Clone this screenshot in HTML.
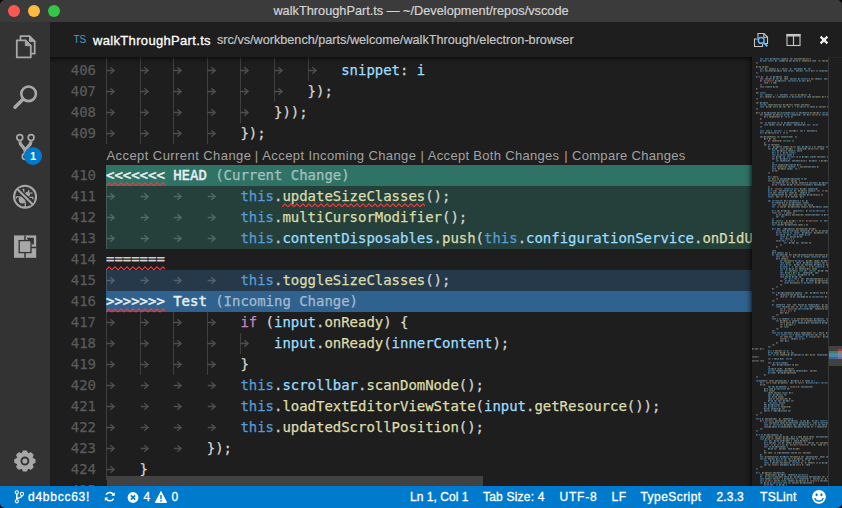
<!DOCTYPE html>
<html lang="en">
<head>
<meta charset="utf-8">
<title>walkThroughPart.ts — ~/Development/repos/vscode</title>
<style>
html,body{margin:0;padding:0;background:#000;}
body{width:842px;height:508px;overflow:hidden;position:relative;font-family:"Liberation Sans",sans-serif;}
#win{position:absolute;left:0;top:0;width:842px;height:508px;border-radius:5px;overflow:hidden;background:#1e1e1e;}
#titlebar{position:absolute;left:0;top:0;width:842px;height:22px;background:#3b3b3b;color:#d4d4d4;font-size:12.75px;line-height:22px;text-align:center;-webkit-text-stroke:.2px #d4d4d4;}
.tl{position:absolute;top:5px;width:12px;height:12px;border-radius:50%;}
#activity{position:absolute;left:0;top:22px;width:50px;height:464px;background:#333333;}
#activity svg{position:absolute;left:0;top:0;}
#badge{position:absolute;left:24px;top:125px;width:18px;height:18px;border-radius:50%;background:#007acc;color:#fff;font-size:11px;font-weight:bold;line-height:18px;text-align:center;}
#main{position:absolute;left:50px;top:22px;width:792px;height:464px;overflow:hidden;}
#header{position:absolute;left:0;top:0;width:792px;height:35px;background:#1e1e1e;z-index:5;}
#header .ts{position:absolute;left:23.5px;top:12px;font-size:10px;line-height:12px;color:#519aba;letter-spacing:0px;}
#header .fn{position:absolute;left:43px;top:10px;font-size:13px;line-height:17px;color:#ffffff;white-space:nowrap;letter-spacing:.33px;-webkit-text-stroke:.3px #fff;}
#header .path{position:absolute;left:167px;top:10px;font-size:12.66px;line-height:17px;color:#c4c4c4;white-space:nowrap;-webkit-text-stroke:.2px #c4c4c4;}
#header svg{position:absolute;left:0;top:0;}
#editor{position:absolute;left:0;top:35px;width:702px;height:429px;overflow:hidden;background:#1e1e1e;}
#editor:after{content:"";position:absolute;left:0;top:0;width:702px;height:429px;box-shadow:inset 0 6px 6px -6px #000, inset -6px 0 6px -6px #000;z-index:4;}
#inner{position:absolute;left:0;top:-57px;width:702px;height:508px;font-family:"DejaVu Sans Mono","Liberation Mono",monospace;font-size:14px;line-height:21px;}
.band{position:absolute;left:56px;width:646px;height:21px;}
.num{position:absolute;left:0;width:46px;text-align:right;color:#5a5a5a;height:21px;white-space:pre;letter-spacing:-0.03px;-webkit-text-stroke:.25px;}
.g{position:absolute;width:1px;height:21px;background:rgba(255,255,255,.15);}
.ar{position:absolute;height:21px;width:9px;}
.sq{position:absolute;height:5px;}
.lens span{position:absolute;top:1px;}
.code{position:absolute;white-space:pre;height:21px;letter-spacing:-0.03px;-webkit-text-stroke:.25px;}
.lens{position:absolute;left:0;width:702px;height:21px;line-height:21px;font-family:"Liberation Sans",sans-serif;font-size:13px;letter-spacing:.43px;color:#a2a2a2;white-space:pre;}
.v{color:#9cdcfe}.k{color:#569cd6}.p{color:#d4d4d4}.f{color:#dcdcaa}.c{color:#c586c0}.h{color:#e8eeec;-webkit-text-stroke:.45px}.hm{color:rgba(255,255,255,.5)}
#minimap{position:absolute;left:702px;top:35px;width:76px;height:429px;background:#1e1e1e;}
#ruler{position:absolute;left:778px;top:35px;width:14px;height:429px;background:#1e1e1e;border-left:1px solid #383838;border-top:1px solid #272727;box-sizing:border-box;}
#hscroll{position:absolute;left:57px;top:454px;width:376px;height:10px;background:#424242;}
#status{position:absolute;left:0;top:486px;width:842px;height:22px;background:#007acc;color:#ffffff;font-size:12px;line-height:23px;-webkit-text-stroke:.3px #fff;}
#status span{position:absolute;top:0;white-space:nowrap;}
#status svg{position:absolute;left:0;top:0;}
</style>
</head>
<body>
<div id="win">
  <div id="titlebar">walkThroughPart.ts — ~/Development/repos/vscode
    <i class="tl" style="left:8px;background:#fc5753"></i>
    <i class="tl" style="left:28px;background:#fdbc40"></i>
    <i class="tl" style="left:48px;background:#33c748"></i>
  </div>
  <div id="activity">
<svg width="50" height="464" viewBox="0 0 50 464" fill="none" stroke="#a8a8a8" stroke-linecap="round" stroke-linejoin="round">
<g stroke-width="1.8">
<path d="M16.8 18.300h8.600l5.400 5.400v11.600h-14z"/><path d="M25.400 18.300v5.400h5.400z" fill="#a8a8a8" stroke-width="1"/>
<path d="M20.5 17.2v-3h9l5.2 5.2v12.3h-2.8"/><path d="M29.5 14.2v5.2h5.2z" fill="#a8a8a8" stroke-width="1"/>
</g>
<circle cx="28.600" cy="71.800" r="7.300" stroke-width="2.600"/>
<path d="M22.800 77.600L15 85.300" stroke-width="3.500"/>
<g stroke-width="1.7"><circle cx="19.8" cy="115.6" r="2.9"/><circle cx="31.1" cy="115.6" r="2.9"/><circle cx="25.2" cy="134.6" r="2.9"/></g>
<path d="M19.8 119.3C19.8 124.5 25.2 124.5 25.2 129.5V131.4M31.1 119.3C31.1 124.5 25.2 124.5 25.2 129.5" stroke-width="3.2" stroke-linecap="butt"/>
<circle cx="25.050" cy="174.800" r="11" stroke-width="2.100"/>
<g stroke="none" fill="#a8a8a8"><circle cx="22.300" cy="177.800" r="3.600"/><circle cx="27.500" cy="172.300" r="2.500"/></g>
<g stroke-width="1.300" stroke-linecap="butt" stroke-linejoin="miter"><path d="M16.400 176.600v-1.700h4M25.300 180v4.800h-1.800M23.700 171v-3.600h-1.200M28.300 170.400l0.600-2.400M29.500 171.200h3M29.400 175.300h3.400v2"/></g>
<path d="M17.800 167.500L32.400 182" stroke="#333333" stroke-width="4.600" stroke-linecap="butt"/>
<path d="M17.300 167L32.800 182.400" stroke-width="2.100" stroke-linecap="butt"/>
<rect x="14" y="213.4" width="22.2" height="22.4" fill="#a8a8a8" stroke="none"/>
<g stroke="#333333" stroke-width="1.3" stroke-linecap="butt" stroke-linejoin="miter">
<rect x="19.2" y="218.6" width="11.8" height="12"/>
<path d="M25 213.4v5.2M25 230.6v5.2M31 225.6h5.2M27 216.6h6v6" stroke-width="1.5"/>
<path d="M28 217.4h4.2v4.2" stroke-width="2.2"/>
</g>
<path d="M21.90 432.30 L23.40 429.00 L26.40 429.00 L27.90 432.30 L27.51 432.14 L30.91 430.87 L33.03 432.99 L31.76 436.39 L31.60 436.00 L34.90 437.50 L34.90 440.50 L31.60 442.00 L31.76 441.61 L33.03 445.01 L30.91 447.13 L27.51 445.86 L27.90 445.70 L26.40 449.00 L23.40 449.00 L21.90 445.70 L22.29 445.86 L18.89 447.13 L16.77 445.01 L18.04 441.61 L18.20 442.00 L14.90 440.50 L14.90 437.50 L18.20 436.00 L18.04 436.39 L16.77 432.99 L18.89 430.87 L22.29 432.14Z" fill="#a8a8a8" stroke="#a8a8a8" stroke-width="1.2"/>
<circle cx="24.9" cy="439" r="3.5" fill="#a8a8a8" stroke="#333333" stroke-width="1.9"/>
</svg>
<div id="badge">1</div>
  </div>
  <div id="main">
  <div id="editor"><div id="inner">
<div class="num" style="top:39px">405</div>
<i class="g" style="left:56.0px;top:39px"></i>
<i class="g" style="left:89.6px;top:39px"></i>
<i class="g" style="left:123.2px;top:39px"></i>
<i class="g" style="left:156.8px;top:39px"></i>
<i class="g" style="left:190.4px;top:39px"></i>
<i class="g" style="left:224.0px;top:39px"></i>
<i class="g" style="left:257.6px;top:39px"></i>
<svg class="ar" style="left:56.0px;top:39px" viewBox="0 0 9 21"><path d="M0.7 10.5H8M4.3 7.2L8.2 10.5L4.3 13.8" fill="none" stroke="rgba(227,228,226,0.24)" stroke-width="1.35"/></svg>
<svg class="ar" style="left:89.6px;top:39px" viewBox="0 0 9 21"><path d="M0.7 10.5H8M4.3 7.2L8.2 10.5L4.3 13.8" fill="none" stroke="rgba(227,228,226,0.24)" stroke-width="1.35"/></svg>
<svg class="ar" style="left:123.2px;top:39px" viewBox="0 0 9 21"><path d="M0.7 10.5H8M4.3 7.2L8.2 10.5L4.3 13.8" fill="none" stroke="rgba(227,228,226,0.24)" stroke-width="1.35"/></svg>
<svg class="ar" style="left:156.8px;top:39px" viewBox="0 0 9 21"><path d="M0.7 10.5H8M4.3 7.2L8.2 10.5L4.3 13.8" fill="none" stroke="rgba(227,228,226,0.24)" stroke-width="1.35"/></svg>
<svg class="ar" style="left:190.4px;top:39px" viewBox="0 0 9 21"><path d="M0.7 10.5H8M4.3 7.2L8.2 10.5L4.3 13.8" fill="none" stroke="rgba(227,228,226,0.24)" stroke-width="1.35"/></svg>
<svg class="ar" style="left:224.0px;top:39px" viewBox="0 0 9 21"><path d="M0.7 10.5H8M4.3 7.2L8.2 10.5L4.3 13.8" fill="none" stroke="rgba(227,228,226,0.24)" stroke-width="1.35"/></svg>
<svg class="ar" style="left:257.6px;top:39px" viewBox="0 0 9 21"><path d="M0.7 10.5H8M4.3 7.2L8.2 10.5L4.3 13.8" fill="none" stroke="rgba(227,228,226,0.24)" stroke-width="1.35"/></svg>
<div class="num" style="top:60px">406</div>
<i class="g" style="left:56.0px;top:60px"></i>
<i class="g" style="left:89.6px;top:60px"></i>
<i class="g" style="left:123.2px;top:60px"></i>
<i class="g" style="left:156.8px;top:60px"></i>
<i class="g" style="left:190.4px;top:60px"></i>
<i class="g" style="left:224.0px;top:60px"></i>
<i class="g" style="left:257.6px;top:60px"></i>
<svg class="ar" style="left:56.0px;top:60px" viewBox="0 0 9 21"><path d="M0.7 10.5H8M4.3 7.2L8.2 10.5L4.3 13.8" fill="none" stroke="rgba(227,228,226,0.24)" stroke-width="1.35"/></svg>
<svg class="ar" style="left:89.6px;top:60px" viewBox="0 0 9 21"><path d="M0.7 10.5H8M4.3 7.2L8.2 10.5L4.3 13.8" fill="none" stroke="rgba(227,228,226,0.24)" stroke-width="1.35"/></svg>
<svg class="ar" style="left:123.2px;top:60px" viewBox="0 0 9 21"><path d="M0.7 10.5H8M4.3 7.2L8.2 10.5L4.3 13.8" fill="none" stroke="rgba(227,228,226,0.24)" stroke-width="1.35"/></svg>
<svg class="ar" style="left:156.8px;top:60px" viewBox="0 0 9 21"><path d="M0.7 10.5H8M4.3 7.2L8.2 10.5L4.3 13.8" fill="none" stroke="rgba(227,228,226,0.24)" stroke-width="1.35"/></svg>
<svg class="ar" style="left:190.4px;top:60px" viewBox="0 0 9 21"><path d="M0.7 10.5H8M4.3 7.2L8.2 10.5L4.3 13.8" fill="none" stroke="rgba(227,228,226,0.24)" stroke-width="1.35"/></svg>
<svg class="ar" style="left:224.0px;top:60px" viewBox="0 0 9 21"><path d="M0.7 10.5H8M4.3 7.2L8.2 10.5L4.3 13.8" fill="none" stroke="rgba(227,228,226,0.24)" stroke-width="1.35"/></svg>
<svg class="ar" style="left:257.6px;top:60px" viewBox="0 0 9 21"><path d="M0.7 10.5H8M4.3 7.2L8.2 10.5L4.3 13.8" fill="none" stroke="rgba(227,228,226,0.24)" stroke-width="1.35"/></svg>
<div class="code" style="left:291.2px;top:60px"><span class="v">snippet</span><span class="p">: </span><span class="v">i</span></div>
<div class="num" style="top:81px">407</div>
<i class="g" style="left:56.0px;top:81px"></i>
<i class="g" style="left:89.6px;top:81px"></i>
<i class="g" style="left:123.2px;top:81px"></i>
<i class="g" style="left:156.8px;top:81px"></i>
<i class="g" style="left:190.4px;top:81px"></i>
<i class="g" style="left:224.0px;top:81px"></i>
<svg class="ar" style="left:56.0px;top:81px" viewBox="0 0 9 21"><path d="M0.7 10.5H8M4.3 7.2L8.2 10.5L4.3 13.8" fill="none" stroke="rgba(227,228,226,0.24)" stroke-width="1.35"/></svg>
<svg class="ar" style="left:89.6px;top:81px" viewBox="0 0 9 21"><path d="M0.7 10.5H8M4.3 7.2L8.2 10.5L4.3 13.8" fill="none" stroke="rgba(227,228,226,0.24)" stroke-width="1.35"/></svg>
<svg class="ar" style="left:123.2px;top:81px" viewBox="0 0 9 21"><path d="M0.7 10.5H8M4.3 7.2L8.2 10.5L4.3 13.8" fill="none" stroke="rgba(227,228,226,0.24)" stroke-width="1.35"/></svg>
<svg class="ar" style="left:156.8px;top:81px" viewBox="0 0 9 21"><path d="M0.7 10.5H8M4.3 7.2L8.2 10.5L4.3 13.8" fill="none" stroke="rgba(227,228,226,0.24)" stroke-width="1.35"/></svg>
<svg class="ar" style="left:190.4px;top:81px" viewBox="0 0 9 21"><path d="M0.7 10.5H8M4.3 7.2L8.2 10.5L4.3 13.8" fill="none" stroke="rgba(227,228,226,0.24)" stroke-width="1.35"/></svg>
<svg class="ar" style="left:224.0px;top:81px" viewBox="0 0 9 21"><path d="M0.7 10.5H8M4.3 7.2L8.2 10.5L4.3 13.8" fill="none" stroke="rgba(227,228,226,0.24)" stroke-width="1.35"/></svg>
<div class="code" style="left:257.6px;top:81px"><span class="p">});</span></div>
<div class="num" style="top:102px">408</div>
<i class="g" style="left:56.0px;top:102px"></i>
<i class="g" style="left:89.6px;top:102px"></i>
<i class="g" style="left:123.2px;top:102px"></i>
<i class="g" style="left:156.8px;top:102px"></i>
<i class="g" style="left:190.4px;top:102px"></i>
<svg class="ar" style="left:56.0px;top:102px" viewBox="0 0 9 21"><path d="M0.7 10.5H8M4.3 7.2L8.2 10.5L4.3 13.8" fill="none" stroke="rgba(227,228,226,0.24)" stroke-width="1.35"/></svg>
<svg class="ar" style="left:89.6px;top:102px" viewBox="0 0 9 21"><path d="M0.7 10.5H8M4.3 7.2L8.2 10.5L4.3 13.8" fill="none" stroke="rgba(227,228,226,0.24)" stroke-width="1.35"/></svg>
<svg class="ar" style="left:123.2px;top:102px" viewBox="0 0 9 21"><path d="M0.7 10.5H8M4.3 7.2L8.2 10.5L4.3 13.8" fill="none" stroke="rgba(227,228,226,0.24)" stroke-width="1.35"/></svg>
<svg class="ar" style="left:156.8px;top:102px" viewBox="0 0 9 21"><path d="M0.7 10.5H8M4.3 7.2L8.2 10.5L4.3 13.8" fill="none" stroke="rgba(227,228,226,0.24)" stroke-width="1.35"/></svg>
<svg class="ar" style="left:190.4px;top:102px" viewBox="0 0 9 21"><path d="M0.7 10.5H8M4.3 7.2L8.2 10.5L4.3 13.8" fill="none" stroke="rgba(227,228,226,0.24)" stroke-width="1.35"/></svg>
<div class="code" style="left:224.0px;top:102px"><span class="p">}));</span></div>
<div class="num" style="top:123px">409</div>
<i class="g" style="left:56.0px;top:123px"></i>
<i class="g" style="left:89.6px;top:123px"></i>
<i class="g" style="left:123.2px;top:123px"></i>
<i class="g" style="left:156.8px;top:123px"></i>
<svg class="ar" style="left:56.0px;top:123px" viewBox="0 0 9 21"><path d="M0.7 10.5H8M4.3 7.2L8.2 10.5L4.3 13.8" fill="none" stroke="rgba(227,228,226,0.24)" stroke-width="1.35"/></svg>
<svg class="ar" style="left:89.6px;top:123px" viewBox="0 0 9 21"><path d="M0.7 10.5H8M4.3 7.2L8.2 10.5L4.3 13.8" fill="none" stroke="rgba(227,228,226,0.24)" stroke-width="1.35"/></svg>
<svg class="ar" style="left:123.2px;top:123px" viewBox="0 0 9 21"><path d="M0.7 10.5H8M4.3 7.2L8.2 10.5L4.3 13.8" fill="none" stroke="rgba(227,228,226,0.24)" stroke-width="1.35"/></svg>
<svg class="ar" style="left:156.8px;top:123px" viewBox="0 0 9 21"><path d="M0.7 10.5H8M4.3 7.2L8.2 10.5L4.3 13.8" fill="none" stroke="rgba(227,228,226,0.24)" stroke-width="1.35"/></svg>
<div class="code" style="left:190.4px;top:123px"><span class="p">});</span></div>
<div class="lens" style="top:144px"><span style="left:56.5px;letter-spacing:0.43px">Accept Current Change</span><span style="left:204.7px;letter-spacing:0px">|</span><span style="left:212.3px;letter-spacing:0.4px">Accept Incoming Change</span><span style="left:370.6px;letter-spacing:0px">|</span><span style="left:377.8px;letter-spacing:0.31px">Accept Both Changes</span><span style="left:514.2px;letter-spacing:0px">|</span><span style="left:522px;letter-spacing:0.3px">Compare Changes</span></div>
<div class="band" style="top:165px;background:#2f7366"></div>
<div class="num" style="top:165px">410</div>
<div class="code" style="left:56.0px;top:165px"><span class="h">&lt;&lt;&lt;&lt;&lt;&lt;&lt; HEAD</span><span class="hm"> (Current Change)</span></div>
<svg class="sq" style="left:56.0px;top:182px;width:58.8px" viewBox="0 0 58.8 5"><polyline points="0 4.0 3 0.9 6 4.0 9 0.9 12 4.0 15 0.9 18 4.0 21 0.9 24 4.0 27 0.9 30 4.0 33 0.9 36 4.0 39 0.9 42 4.0 45 0.9 48 4.0 51 0.9 54 4.0 57 0.9 60 4.0" fill="none" stroke="#ee3a3e" stroke-width="1.15"/></svg>
<div class="band" style="top:186px;background:#25403b"></div>
<div class="num" style="top:186px">411</div>
<i class="g" style="left:56.0px;top:186px"></i>
<svg class="ar" style="left:56.0px;top:186px" viewBox="0 0 9 21"><path d="M0.7 10.5H8M4.3 7.2L8.2 10.5L4.3 13.8" fill="none" stroke="rgba(227,228,226,0.24)" stroke-width="1.35"/></svg>
<svg class="ar" style="left:89.6px;top:186px" viewBox="0 0 9 21"><path d="M0.7 10.5H8M4.3 7.2L8.2 10.5L4.3 13.8" fill="none" stroke="rgba(227,228,226,0.24)" stroke-width="1.35"/></svg>
<svg class="ar" style="left:123.2px;top:186px" viewBox="0 0 9 21"><path d="M0.7 10.5H8M4.3 7.2L8.2 10.5L4.3 13.8" fill="none" stroke="rgba(227,228,226,0.24)" stroke-width="1.35"/></svg>
<svg class="ar" style="left:156.8px;top:186px" viewBox="0 0 9 21"><path d="M0.7 10.5H8M4.3 7.2L8.2 10.5L4.3 13.8" fill="none" stroke="rgba(227,228,226,0.24)" stroke-width="1.35"/></svg>
<div class="code" style="left:190.4px;top:186px"><span class="k">this</span><span class="p">.</span><span class="f">updateSizeClasses</span><span class="p">();</span></div>
<svg class="sq" style="left:232.4px;top:203px;width:142.8px" viewBox="0 0 142.8 5"><polyline points="0 4.0 3 0.9 6 4.0 9 0.9 12 4.0 15 0.9 18 4.0 21 0.9 24 4.0 27 0.9 30 4.0 33 0.9 36 4.0 39 0.9 42 4.0 45 0.9 48 4.0 51 0.9 54 4.0 57 0.9 60 4.0 63 0.9 66 4.0 69 0.9 72 4.0 75 0.9 78 4.0 81 0.9 84 4.0 87 0.9 90 4.0 93 0.9 96 4.0 99 0.9 102 4.0 105 0.9 108 4.0 111 0.9 114 4.0 117 0.9 120 4.0 123 0.9 126 4.0 129 0.9 132 4.0 135 0.9 138 4.0 141 0.9 144 4.0" fill="none" stroke="#ee3a3e" stroke-width="1.15"/></svg>
<div class="band" style="top:207px;background:#25403b"></div>
<div class="num" style="top:207px">412</div>
<i class="g" style="left:56.0px;top:207px"></i>
<svg class="ar" style="left:56.0px;top:207px" viewBox="0 0 9 21"><path d="M0.7 10.5H8M4.3 7.2L8.2 10.5L4.3 13.8" fill="none" stroke="rgba(227,228,226,0.24)" stroke-width="1.35"/></svg>
<svg class="ar" style="left:89.6px;top:207px" viewBox="0 0 9 21"><path d="M0.7 10.5H8M4.3 7.2L8.2 10.5L4.3 13.8" fill="none" stroke="rgba(227,228,226,0.24)" stroke-width="1.35"/></svg>
<svg class="ar" style="left:123.2px;top:207px" viewBox="0 0 9 21"><path d="M0.7 10.5H8M4.3 7.2L8.2 10.5L4.3 13.8" fill="none" stroke="rgba(227,228,226,0.24)" stroke-width="1.35"/></svg>
<svg class="ar" style="left:156.8px;top:207px" viewBox="0 0 9 21"><path d="M0.7 10.5H8M4.3 7.2L8.2 10.5L4.3 13.8" fill="none" stroke="rgba(227,228,226,0.24)" stroke-width="1.35"/></svg>
<div class="code" style="left:190.4px;top:207px"><span class="k">this</span><span class="p">.</span><span class="f">multiCursorModifier</span><span class="p">();</span></div>
<div class="band" style="top:228px;background:#25403b"></div>
<div class="num" style="top:228px">413</div>
<i class="g" style="left:56.0px;top:228px"></i>
<svg class="ar" style="left:56.0px;top:228px" viewBox="0 0 9 21"><path d="M0.7 10.5H8M4.3 7.2L8.2 10.5L4.3 13.8" fill="none" stroke="rgba(227,228,226,0.24)" stroke-width="1.35"/></svg>
<svg class="ar" style="left:89.6px;top:228px" viewBox="0 0 9 21"><path d="M0.7 10.5H8M4.3 7.2L8.2 10.5L4.3 13.8" fill="none" stroke="rgba(227,228,226,0.24)" stroke-width="1.35"/></svg>
<svg class="ar" style="left:123.2px;top:228px" viewBox="0 0 9 21"><path d="M0.7 10.5H8M4.3 7.2L8.2 10.5L4.3 13.8" fill="none" stroke="rgba(227,228,226,0.24)" stroke-width="1.35"/></svg>
<svg class="ar" style="left:156.8px;top:228px" viewBox="0 0 9 21"><path d="M0.7 10.5H8M4.3 7.2L8.2 10.5L4.3 13.8" fill="none" stroke="rgba(227,228,226,0.24)" stroke-width="1.35"/></svg>
<div class="code" style="left:190.4px;top:228px"><span class="k">this</span><span class="p">.</span><span class="v">contentDisposables</span><span class="p">.</span><span class="f">push</span><span class="p">(</span><span class="k">this</span><span class="p">.</span><span class="v">configurationService</span><span class="p">.</span><span class="f">onDidUpdateConfiguration</span><span class="p">(</span></div>
<div class="num" style="top:249px">414</div>
<div class="code" style="left:56.0px;top:249px"><span class="p">=======</span></div>
<svg class="sq" style="left:56.0px;top:266px;width:58.8px" viewBox="0 0 58.8 5"><polyline points="0 4.0 3 0.9 6 4.0 9 0.9 12 4.0 15 0.9 18 4.0 21 0.9 24 4.0 27 0.9 30 4.0 33 0.9 36 4.0 39 0.9 42 4.0 45 0.9 48 4.0 51 0.9 54 4.0 57 0.9 60 4.0" fill="none" stroke="#ee3a3e" stroke-width="1.15"/></svg>
<div class="band" style="top:270px;background:#25394b"></div>
<div class="num" style="top:270px">415</div>
<i class="g" style="left:56.0px;top:270px"></i>
<svg class="ar" style="left:56.0px;top:270px" viewBox="0 0 9 21"><path d="M0.7 10.5H8M4.3 7.2L8.2 10.5L4.3 13.8" fill="none" stroke="rgba(227,228,226,0.24)" stroke-width="1.35"/></svg>
<svg class="ar" style="left:89.6px;top:270px" viewBox="0 0 9 21"><path d="M0.7 10.5H8M4.3 7.2L8.2 10.5L4.3 13.8" fill="none" stroke="rgba(227,228,226,0.24)" stroke-width="1.35"/></svg>
<svg class="ar" style="left:123.2px;top:270px" viewBox="0 0 9 21"><path d="M0.7 10.5H8M4.3 7.2L8.2 10.5L4.3 13.8" fill="none" stroke="rgba(227,228,226,0.24)" stroke-width="1.35"/></svg>
<svg class="ar" style="left:156.8px;top:270px" viewBox="0 0 9 21"><path d="M0.7 10.5H8M4.3 7.2L8.2 10.5L4.3 13.8" fill="none" stroke="rgba(227,228,226,0.24)" stroke-width="1.35"/></svg>
<div class="code" style="left:190.4px;top:270px"><span class="k">this</span><span class="p">.</span><span class="f">toggleSizeClasses</span><span class="p">();</span></div>
<div class="band" style="top:291px;background:#2f628e"></div>
<div class="num" style="top:291px">416</div>
<div class="code" style="left:56.0px;top:291px"><span class="h">&gt;&gt;&gt;&gt;&gt;&gt;&gt; Test</span><span class="hm"> (Incoming Change)</span></div>
<svg class="sq" style="left:56.0px;top:308px;width:58.8px" viewBox="0 0 58.8 5"><polyline points="0 4.0 3 0.9 6 4.0 9 0.9 12 4.0 15 0.9 18 4.0 21 0.9 24 4.0 27 0.9 30 4.0 33 0.9 36 4.0 39 0.9 42 4.0 45 0.9 48 4.0 51 0.9 54 4.0 57 0.9 60 4.0" fill="none" stroke="#ee3a3e" stroke-width="1.15"/></svg>
<div class="num" style="top:312px">417</div>
<i class="g" style="left:56.0px;top:312px"></i>
<i class="g" style="left:89.6px;top:312px"></i>
<i class="g" style="left:123.2px;top:312px"></i>
<i class="g" style="left:156.8px;top:312px"></i>
<svg class="ar" style="left:56.0px;top:312px" viewBox="0 0 9 21"><path d="M0.7 10.5H8M4.3 7.2L8.2 10.5L4.3 13.8" fill="none" stroke="rgba(227,228,226,0.24)" stroke-width="1.35"/></svg>
<svg class="ar" style="left:89.6px;top:312px" viewBox="0 0 9 21"><path d="M0.7 10.5H8M4.3 7.2L8.2 10.5L4.3 13.8" fill="none" stroke="rgba(227,228,226,0.24)" stroke-width="1.35"/></svg>
<svg class="ar" style="left:123.2px;top:312px" viewBox="0 0 9 21"><path d="M0.7 10.5H8M4.3 7.2L8.2 10.5L4.3 13.8" fill="none" stroke="rgba(227,228,226,0.24)" stroke-width="1.35"/></svg>
<svg class="ar" style="left:156.8px;top:312px" viewBox="0 0 9 21"><path d="M0.7 10.5H8M4.3 7.2L8.2 10.5L4.3 13.8" fill="none" stroke="rgba(227,228,226,0.24)" stroke-width="1.35"/></svg>
<div class="code" style="left:190.4px;top:312px"><span class="c">if</span><span class="p"> (</span><span class="v">input</span><span class="p">.</span><span class="f">onReady</span><span class="p">) {</span></div>
<div class="num" style="top:333px">418</div>
<i class="g" style="left:56.0px;top:333px"></i>
<i class="g" style="left:89.6px;top:333px"></i>
<i class="g" style="left:123.2px;top:333px"></i>
<i class="g" style="left:156.8px;top:333px"></i>
<i class="g" style="left:190.4px;top:333px"></i>
<svg class="ar" style="left:56.0px;top:333px" viewBox="0 0 9 21"><path d="M0.7 10.5H8M4.3 7.2L8.2 10.5L4.3 13.8" fill="none" stroke="rgba(227,228,226,0.24)" stroke-width="1.35"/></svg>
<svg class="ar" style="left:89.6px;top:333px" viewBox="0 0 9 21"><path d="M0.7 10.5H8M4.3 7.2L8.2 10.5L4.3 13.8" fill="none" stroke="rgba(227,228,226,0.24)" stroke-width="1.35"/></svg>
<svg class="ar" style="left:123.2px;top:333px" viewBox="0 0 9 21"><path d="M0.7 10.5H8M4.3 7.2L8.2 10.5L4.3 13.8" fill="none" stroke="rgba(227,228,226,0.24)" stroke-width="1.35"/></svg>
<svg class="ar" style="left:156.8px;top:333px" viewBox="0 0 9 21"><path d="M0.7 10.5H8M4.3 7.2L8.2 10.5L4.3 13.8" fill="none" stroke="rgba(227,228,226,0.24)" stroke-width="1.35"/></svg>
<svg class="ar" style="left:190.4px;top:333px" viewBox="0 0 9 21"><path d="M0.7 10.5H8M4.3 7.2L8.2 10.5L4.3 13.8" fill="none" stroke="rgba(227,228,226,0.24)" stroke-width="1.35"/></svg>
<div class="code" style="left:224.0px;top:333px"><span class="v">input</span><span class="p">.</span><span class="f">onReady</span><span class="p">(</span><span class="v">innerContent</span><span class="p">);</span></div>
<div class="num" style="top:354px">419</div>
<i class="g" style="left:56.0px;top:354px"></i>
<i class="g" style="left:89.6px;top:354px"></i>
<i class="g" style="left:123.2px;top:354px"></i>
<i class="g" style="left:156.8px;top:354px"></i>
<svg class="ar" style="left:56.0px;top:354px" viewBox="0 0 9 21"><path d="M0.7 10.5H8M4.3 7.2L8.2 10.5L4.3 13.8" fill="none" stroke="rgba(227,228,226,0.24)" stroke-width="1.35"/></svg>
<svg class="ar" style="left:89.6px;top:354px" viewBox="0 0 9 21"><path d="M0.7 10.5H8M4.3 7.2L8.2 10.5L4.3 13.8" fill="none" stroke="rgba(227,228,226,0.24)" stroke-width="1.35"/></svg>
<svg class="ar" style="left:123.2px;top:354px" viewBox="0 0 9 21"><path d="M0.7 10.5H8M4.3 7.2L8.2 10.5L4.3 13.8" fill="none" stroke="rgba(227,228,226,0.24)" stroke-width="1.35"/></svg>
<svg class="ar" style="left:156.8px;top:354px" viewBox="0 0 9 21"><path d="M0.7 10.5H8M4.3 7.2L8.2 10.5L4.3 13.8" fill="none" stroke="rgba(227,228,226,0.24)" stroke-width="1.35"/></svg>
<div class="code" style="left:190.4px;top:354px"><span class="p">}</span></div>
<div class="num" style="top:375px">420</div>
<i class="g" style="left:56.0px;top:375px"></i>
<svg class="ar" style="left:56.0px;top:375px" viewBox="0 0 9 21"><path d="M0.7 10.5H8M4.3 7.2L8.2 10.5L4.3 13.8" fill="none" stroke="rgba(227,228,226,0.24)" stroke-width="1.35"/></svg>
<svg class="ar" style="left:89.6px;top:375px" viewBox="0 0 9 21"><path d="M0.7 10.5H8M4.3 7.2L8.2 10.5L4.3 13.8" fill="none" stroke="rgba(227,228,226,0.24)" stroke-width="1.35"/></svg>
<svg class="ar" style="left:123.2px;top:375px" viewBox="0 0 9 21"><path d="M0.7 10.5H8M4.3 7.2L8.2 10.5L4.3 13.8" fill="none" stroke="rgba(227,228,226,0.24)" stroke-width="1.35"/></svg>
<svg class="ar" style="left:156.8px;top:375px" viewBox="0 0 9 21"><path d="M0.7 10.5H8M4.3 7.2L8.2 10.5L4.3 13.8" fill="none" stroke="rgba(227,228,226,0.24)" stroke-width="1.35"/></svg>
<div class="code" style="left:190.4px;top:375px"><span class="k">this</span><span class="p">.</span><span class="v">scrollbar</span><span class="p">.</span><span class="f">scanDomNode</span><span class="p">();</span></div>
<div class="num" style="top:396px">421</div>
<i class="g" style="left:56.0px;top:396px"></i>
<svg class="ar" style="left:56.0px;top:396px" viewBox="0 0 9 21"><path d="M0.7 10.5H8M4.3 7.2L8.2 10.5L4.3 13.8" fill="none" stroke="rgba(227,228,226,0.24)" stroke-width="1.35"/></svg>
<svg class="ar" style="left:89.6px;top:396px" viewBox="0 0 9 21"><path d="M0.7 10.5H8M4.3 7.2L8.2 10.5L4.3 13.8" fill="none" stroke="rgba(227,228,226,0.24)" stroke-width="1.35"/></svg>
<svg class="ar" style="left:123.2px;top:396px" viewBox="0 0 9 21"><path d="M0.7 10.5H8M4.3 7.2L8.2 10.5L4.3 13.8" fill="none" stroke="rgba(227,228,226,0.24)" stroke-width="1.35"/></svg>
<svg class="ar" style="left:156.8px;top:396px" viewBox="0 0 9 21"><path d="M0.7 10.5H8M4.3 7.2L8.2 10.5L4.3 13.8" fill="none" stroke="rgba(227,228,226,0.24)" stroke-width="1.35"/></svg>
<div class="code" style="left:190.4px;top:396px"><span class="k">this</span><span class="p">.</span><span class="f">loadTextEditorViewState</span><span class="p">(</span><span class="v">input</span><span class="p">.</span><span class="f">getResource</span><span class="p">());</span></div>
<div class="num" style="top:417px">422</div>
<i class="g" style="left:56.0px;top:417px"></i>
<svg class="ar" style="left:56.0px;top:417px" viewBox="0 0 9 21"><path d="M0.7 10.5H8M4.3 7.2L8.2 10.5L4.3 13.8" fill="none" stroke="rgba(227,228,226,0.24)" stroke-width="1.35"/></svg>
<svg class="ar" style="left:89.6px;top:417px" viewBox="0 0 9 21"><path d="M0.7 10.5H8M4.3 7.2L8.2 10.5L4.3 13.8" fill="none" stroke="rgba(227,228,226,0.24)" stroke-width="1.35"/></svg>
<svg class="ar" style="left:123.2px;top:417px" viewBox="0 0 9 21"><path d="M0.7 10.5H8M4.3 7.2L8.2 10.5L4.3 13.8" fill="none" stroke="rgba(227,228,226,0.24)" stroke-width="1.35"/></svg>
<svg class="ar" style="left:156.8px;top:417px" viewBox="0 0 9 21"><path d="M0.7 10.5H8M4.3 7.2L8.2 10.5L4.3 13.8" fill="none" stroke="rgba(227,228,226,0.24)" stroke-width="1.35"/></svg>
<div class="code" style="left:190.4px;top:417px"><span class="k">this</span><span class="p">.</span><span class="f">updatedScrollPosition</span><span class="p">();</span></div>
<div class="num" style="top:438px">423</div>
<i class="g" style="left:56.0px;top:438px"></i>
<svg class="ar" style="left:56.0px;top:438px" viewBox="0 0 9 21"><path d="M0.7 10.5H8M4.3 7.2L8.2 10.5L4.3 13.8" fill="none" stroke="rgba(227,228,226,0.24)" stroke-width="1.35"/></svg>
<svg class="ar" style="left:89.6px;top:438px" viewBox="0 0 9 21"><path d="M0.7 10.5H8M4.3 7.2L8.2 10.5L4.3 13.8" fill="none" stroke="rgba(227,228,226,0.24)" stroke-width="1.35"/></svg>
<svg class="ar" style="left:123.2px;top:438px" viewBox="0 0 9 21"><path d="M0.7 10.5H8M4.3 7.2L8.2 10.5L4.3 13.8" fill="none" stroke="rgba(227,228,226,0.24)" stroke-width="1.35"/></svg>
<div class="code" style="left:156.8px;top:438px"><span class="p">});</span></div>
<div class="num" style="top:459px">424</div>
<i class="g" style="left:56.0px;top:459px"></i>
<svg class="ar" style="left:56.0px;top:459px" viewBox="0 0 9 21"><path d="M0.7 10.5H8M4.3 7.2L8.2 10.5L4.3 13.8" fill="none" stroke="rgba(227,228,226,0.24)" stroke-width="1.35"/></svg>
<div class="code" style="left:89.6px;top:459px"><span class="p">}</span></div>
<div class="num" style="top:480px">425</div>
  </div></div>
  <div id="hscroll"></div>
  <div id="minimap"><svg width="76" height="429" viewBox="752 57 76 429" style="position:absolute;left:0;top:0" >
<path stroke="#569cd6" stroke-opacity="0.85" stroke-width="1.25" stroke-dasharray="0.7 0.5 1.2 0.4 0.5 0.6 0.9 0.3" fill="none" d="M760 58.8h3.8M760 68.8h3.8M805 70.8h4.8M788 80.8h9.8M760 94.8h2.8M760 104.8h4.8M773 106.8h4.8M822 112.8h5.8M807 124.8h3.8M774 130.8h7.8M792 140.8h1.8M772 150.8h3.8M772 154.8h3.8M787 156.8h7.8M772 164.8h4.8M795 168.8h2.8M772 182.8h3.8M794 188.8h3.8M808 192.8h1.8M772 200.8h7.8M772 206.8h2.8M809 210.8h3.8M781 216.8h3.8M772 224.8h3.8M791 230.8h2.8M793 234.8h4.8M780 238.8h3.8M789 252.8h0.8M797 256.8h2.8M780 260.8h2.8M780 264.8h4.8M780 268.8h4.8M780 272.8h3.8M784 278.8h2.8M826 278.8h1.8M801 282.8h1.8M812 296.8h11.8M804 306.8h3.8M776 320.8h2.8M777 332.8h5.8M795 336.8h8.8M802 338.8h2.8M791 350.8h0.8M768 354.8h3.8M786 358.8h5.8M768 370.8h3.8M814 380.8h0.8M821 382.8h6.8M769 402.8h8.8M756 418.8h4.8M764 422.8h3.8M773 424.8h9.8M764 440.8h3.8M760 456.8h3.8M764 460.8h3.8M792 462.8h7.8M798 474.8h9.8M760 480.8h2.8"/>
<path stroke="#569cd6" stroke-opacity="0.85" stroke-width="1.25" stroke-dasharray="1.1 0.4 0.6 0.7 0.8 0.3 1.3 0.5 0.4 0.4" fill="none" d="M760 60.8h4.8M760 70.8h3.8M756 76.8h3.8M799 80.8h6.8M760 96.8h3.8M765 104.8h1.8M797 106.8h8.8M784 114.8h5.8M813 124.8h4.8M760 132.8h3.8M768 146.8h2.8M772 152.8h3.8M777 154.8h8.8M789 158.8h1.8M772 166.8h3.8M768 176.8h3.8M768 188.8h2.8M768 190.8h3.8M768 194.8h3.8M772 202.8h3.8M772 210.8h3.8M813 210.8h11.8M772 220.8h2.8M772 228.8h3.8M776 232.8h4.8M805 234.8h4.8M779 240.8h6.8M772 254.8h2.8M801 256.8h1.8M795 260.8h8.8M780 266.8h4.8M786 268.8h2.8M798 272.8h2.8M789 278.8h3.8M785 280.8h9.8M804 282.8h8.8M772 304.8h2.8M795 308.8h11.8M827 320.8h0.8M776 334.8h3.8M806 336.8h1.8M768 350.8h3.8M768 352.8h4.8M799 354.8h4.8M773 362.8h8.8M768 372.8h4.8M760 382.8h3.8M774 388.8h11.8M768 406.8h8.8M812 420.8h6.8M818 422.8h7.8M756 434.8h3.8M764 442.8h3.8M781 458.8h5.8M773 460.8h9.8M756 472.8h3.8M760 476.8h2.8M770 482.8h11.8"/>
<path stroke="#569cd6" stroke-opacity="0.85" stroke-width="1.25" stroke-dasharray="0.5 0.4 0.9 0.6 1.4 0.4 0.7 0.5" fill="none" d="M768 60.8h5.8M788 70.8h5.8M801 78.8h8.8M760 92.8h5.8M796 96.8h6.8M760 106.8h3.8M791 112.8h3.8M764 124.8h3.8M760 130.8h3.8M786 132.8h1.8M809 146.8h1.8M789 152.8h6.8M772 156.8h2.8M776 160.8h2.8M772 168.8h3.8M768 178.8h2.8M784 188.8h8.8M768 192.8h3.8M768 196.8h4.8M772 204.8h3.8M797 210.8h6.8M772 212.8h4.8M820 220.8h1.8M776 230.8h4.8M794 232.8h5.8M780 236.8h4.8M784 242.8h2.8M776 256.8h3.8M811 256.8h9.8M780 262.8h3.8M815 266.8h9.8M780 270.8h2.8M780 274.8h4.8M794 278.8h1.8M784 282.8h4.8M772 292.8h2.8M776 306.8h4.8M772 318.8h3.8M772 332.8h3.8M781 334.8h6.8M809 336.8h4.8M783 350.8h2.8M787 352.8h2.8M768 358.8h2.8M768 368.8h2.8M756 380.8h3.8M808 382.8h11.8M782 392.8h5.8M773 410.8h1.8M820 420.8h7.8M764 424.8h3.8M760 436.8h4.8M764 444.8h4.8M819 458.8h0.8M764 462.8h4.8M760 474.8h2.8M760 478.8h3.8"/>
<path stroke="#9cdcfe" stroke-opacity="0.68" stroke-width="1.25" stroke-dasharray="0.7 0.5 1.2 0.4 0.5 0.6 0.9 0.3" fill="none" d="M765 58.8h1.8M790 58.8h2.8M789 60.8h2.8M794 68.8h8.8M765 70.8h8.8M796 70.8h6.8M825 70.8h2.8M765 78.8h6.8M790 78.8h6.8M824 78.8h3.8M767 86.8h4.8M780 94.8h7.8M778 96.8h9.8M827 96.8h0.8M779 106.8h2.8M827 106.8h0.8M799 112.8h9.8M769 114.8h2.8M803 114.8h2.8M768 122.8h7.8M801 122.8h1.8M779 124.8h2.8M794 124.8h11.8M807 130.8h9.8M795 136.8h1.8M764 144.8h2.8M797 146.8h3.8M826 146.8h1.8M808 148.8h2.8M797 150.8h4.8M793 154.8h0.8M799 156.8h1.8M817 156.8h8.8M792 160.8h8.8M790 164.8h5.8M808 166.8h7.8M780 178.8h7.8M804 178.8h2.8M782 182.8h2.8M809 182.8h8.8M783 184.8h2.8M814 184.8h11.8M779 190.8h7.8M778 192.8h5.8M802 192.8h4.8M799 194.8h6.8M791 196.8h6.8M789 200.8h9.8M786 202.8h1.8M788 204.8h4.8M808 204.8h4.8M777 210.8h2.8M793 212.8h1.8M812 214.8h7.8M824 220.8h3.8M777 224.8h6.8M777 228.8h3.8M784 230.8h1.8M822 230.8h5.8M780 234.8h4.8M790 236.8h5.8M794 240.8h0.8M801 242.8h6.8M776 254.8h9.8M782 256.8h3.8M822 256.8h4.8M796 262.8h4.8M822 262.8h2.8M805 264.8h7.8M795 266.8h2.8M789 270.8h8.8M827 270.8h0.8M815 272.8h3.8M785 276.8h5.8M806 278.8h11.8M822 282.8h5.8M805 292.8h2.8M790 294.8h5.8M797 296.8h5.8M793 304.8h3.8M782 306.8h7.8M826 306.8h1.8M780 312.8h3.8M809 318.8h3.8M814 320.8h11.8M811 322.8h9.8M784 332.8h8.8M819 332.8h4.8M802 334.8h9.8M789 336.8h3.8M780 340.8h3.8M791 352.8h2.8M774 358.8h4.8M772 364.8h3.8M771 368.8h4.8M780 370.8h9.8M773 372.8h2.8M775 380.8h11.8M790 382.8h3.8M772 386.8h2.8M801 386.8h11.8M787 388.8h2.8M768 394.8h3.8M768 396.8h2.8M773 398.8h1.8M778 400.8h3.8M764 404.8h2.8M764 406.8h2.8M764 410.8h3.8M765 418.8h11.8M788 418.8h4.8M769 422.8h9.8M793 424.8h3.8M822 424.8h4.8M794 426.8h8.8M761 434.8h1.8M780 434.8h1.8M816 436.8h11.8M769 440.8h2.8M794 440.8h4.8M769 442.8h6.8M808 442.8h5.8M769 446.8h1.8M787 446.8h0.8M764 452.8h2.8M791 452.8h5.8M806 456.8h11.8M768 458.8h6.8M805 458.8h5.8M789 460.8h7.8M772 462.8h6.8M780 464.8h8.8M773 472.8h11.8M784 476.8h4.8M809 476.8h11.8M773 478.8h6.8M813 478.8h6.8M820 480.8h7.8M792 482.8h6.8M770 484.8h3.8"/>
<path stroke="#9cdcfe" stroke-opacity="0.68" stroke-width="1.25" stroke-dasharray="1.1 0.4 0.6 0.7 0.8 0.3 1.3 0.5 0.4 0.4" fill="none" d="M770 58.8h9.8M775 60.8h2.8M793 60.8h4.8M804 68.8h2.8M774 70.8h7.8M811 70.8h3.8M773 76.8h8.8M773 78.8h1.8M798 78.8h2.8M775 80.8h9.8M773 86.8h4.8M809 94.8h1.8M792 96.8h3.8M760 102.8h7.8M788 106.8h2.8M764 112.8h11.8M817 112.8h3.8M773 114.8h9.8M807 114.8h3.8M784 122.8h8.8M804 122.8h0.8M783 124.8h1.8M794 130.8h3.8M765 132.8h8.8M764 138.8h3.8M773 146.8h8.8M802 146.8h6.8M772 148.8h5.8M777 150.8h9.8M783 152.8h4.8M776 156.8h5.8M802 156.8h6.8M780 158.8h7.8M809 160.8h7.8M797 164.8h3.8M817 166.8h1.8M788 178.8h11.8M779 180.8h9.8M792 182.8h5.8M819 182.8h8.8M787 184.8h5.8M800 188.8h6.8M794 190.8h2.8M785 192.8h2.8M772 194.8h11.8M807 194.8h5.8M800 196.8h3.8M806 200.8h1.8M789 202.8h11.8M793 204.8h9.8M813 206.8h8.8M781 210.8h6.8M782 214.8h8.8M824 214.8h3.8M772 222.8h4.8M785 224.8h11.8M785 228.8h9.8M787 230.8h3.8M802 232.8h9.8M787 234.8h3.8M797 236.8h4.8M789 242.8h5.8M772 252.8h3.8M786 254.8h1.8M793 256.8h2.8M821 260.8h6.8M803 262.8h9.8M794 264.8h5.8M814 264.8h7.8M789 268.8h4.8M818 270.8h5.8M785 272.8h4.8M798 274.8h8.8M792 276.8h5.8M801 280.8h2.8M778 292.8h6.8M810 292.8h8.8M797 294.8h4.8M803 296.8h4.8M805 304.8h1.8M800 306.8h1.8M807 308.8h5.8M785 312.8h3.8M814 318.8h9.8M792 322.8h3.8M822 322.8h5.8M796 332.8h3.8M826 332.8h1.8M816 334.8h1.8M823 336.8h4.8M785 340.8h3.8M791 354.8h7.8M780 358.8h1.8M777 364.8h6.8M780 368.8h2.8M790 370.8h4.8M778 372.8h5.8M791 380.8h7.8M806 382.8h1.8M776 386.8h4.8M764 388.8h3.8M764 390.8h3.8M773 394.8h9.8M772 396.8h4.8M768 400.8h4.8M783 400.8h6.8M768 404.8h11.8M764 408.8h3.8M775 410.8h11.8M779 418.8h1.8M788 420.8h9.8M786 422.8h11.8M799 424.8h9.8M769 426.8h7.8M804 426.8h5.8M764 434.8h6.8M791 436.8h3.8M783 438.8h11.8M774 440.8h4.8M800 440.8h7.8M782 442.8h2.8M786 444.8h2.8M772 446.8h7.8M768 448.8h4.8M779 452.8h4.8M780 456.8h8.8M821 456.8h1.8M776 458.8h3.8M770 460.8h1.8M798 460.8h1.8M822 462.8h5.8M790 464.8h4.8M778 474.8h7.8M794 476.8h11.8M827 476.8h0.8M784 478.8h9.8M825 478.8h1.8M764 482.8h4.8M800 482.8h11.8M779 484.8h5.8"/>
<path stroke="#9cdcfe" stroke-opacity="0.68" stroke-width="1.25" stroke-dasharray="0.5 0.4 0.9 0.6 1.4 0.4 0.7 0.5" fill="none" d="M781 58.8h7.8M779 60.8h3.8M812 60.8h3.8M808 68.8h2.8M783 70.8h3.8M819 70.8h5.8M784 76.8h3.8M776 78.8h2.8M815 78.8h6.8M764 82.8h3.8M765 94.8h7.8M769 96.8h2.8M807 96.8h3.8M768 104.8h1.8M810 106.8h4.8M785 112.8h5.8M764 114.8h4.8M791 114.8h9.8M826 114.8h1.8M793 122.8h6.8M769 124.8h5.8M786 124.8h5.8M800 130.8h2.8M781 136.8h8.8M773 138.8h2.8M783 146.8h3.8M817 146.8h7.8M797 148.8h9.8M788 150.8h7.8M787 154.8h4.8M783 156.8h1.8M811 156.8h4.8M780 160.8h9.8M778 164.8h11.8M788 166.8h7.8M787 168.8h5.8M801 178.8h1.8M776 182.8h5.8M799 182.8h8.8M780 184.8h2.8M806 184.8h6.8M808 188.8h9.8M808 190.8h7.8M789 192.8h4.8M785 194.8h2.8M785 196.8h1.8M768 200.8h2.8M776 202.8h8.8M803 202.8h5.8M804 204.8h2.8M823 206.8h4.8M793 210.8h3.8M805 214.8h6.8M776 216.8h2.8M795 222.8h0.8M806 224.8h1.8M782 230.8h1.8M800 230.8h9.8M825 232.8h2.8M799 234.8h4.8M785 238.8h2.8M796 242.8h2.8M777 252.8h6.8M801 254.8h8.8M804 256.8h5.8M785 262.8h5.8M814 262.8h6.8M801 264.8h2.8M826 264.8h1.8M799 268.8h11.8M825 270.8h1.8M803 272.8h9.8M812 274.8h1.8M801 278.8h2.8M809 280.8h4.8M795 292.8h7.8M780 294.8h8.8M790 296.8h1.8M776 304.8h8.8M808 304.8h11.8M809 306.8h11.8M825 308.8h2.8M782 318.8h7.8M792 320.8h7.8M798 322.8h11.8M780 326.8h2.8M801 332.8h1.8M795 334.8h5.8M827 334.8h0.8M791 338.8h6.8M774 352.8h4.8M817 354.8h10.8M782 362.8h5.8M784 364.8h6.8M772 370.8h2.8M796 370.8h11.8M760 380.8h7.8M805 380.8h4.8M768 386.8h2.8M781 386.8h5.8M769 388.8h3.8M768 392.8h4.8M784 394.8h2.8M768 398.8h3.8M774 400.8h2.8M781 402.8h3.8M781 404.8h2.8M771 408.8h9.8M788 410.8h2.8M783 418.8h4.8M803 420.8h2.8M799 422.8h11.8M818 424.8h2.8M781 426.8h11.8M817 426.8h8.8M771 434.8h7.8M809 436.8h4.8M796 438.8h2.8M780 440.8h2.8M809 440.8h0.8M786 442.8h5.8M827 444.8h0.8M780 446.8h5.8M788 448.8h3.8M784 452.8h5.8M801 456.8h2.8M826 456.8h1.8M788 458.8h2.8M784 460.8h2.8M808 460.8h1.8M764 464.8h2.8M806 464.8h3.8M788 474.8h8.8M806 476.8h1.8M765 478.8h6.8M799 478.8h9.8M788 480.8h6.8M783 482.8h3.8M813 482.8h0.8"/>
<path stroke="#d4d4d4" stroke-opacity="0.55" stroke-width="1.25" stroke-dasharray="0.7 0.5 1.2 0.4 0.5 0.6 0.9 0.3" fill="none" d="M767 58.8h1.8M756 62.8h1.8M785 68.8h2.8M756 72.8h1.8M770 76.8h1.8M771 82.8h0.8M765 86.8h1.8M777 94.8h0.8M789 96.8h1.8M780 104.8h1.8M807 106.8h1.8M796 112.8h1.8M778 116.8h1.8M788 116.8h1.8M777 122.8h2.8M760 126.8h1.8M786 130.8h0.8M777 132.8h1.8M777 136.8h2.8M812 146.8h0.8M777 152.8h1.8M810 156.8h0.8M806 160.8h0.8M798 166.8h0.8M768 180.8h2.8M768 186.8h1.8M773 190.8h1.8M822 190.8h1.8M821 194.8h0.8M781 196.8h1.8M800 200.8h0.8M777 206.8h1.8M784 212.8h0.8M772 218.8h1.8M802 220.8h1.8M811 230.8h2.8M790 232.8h1.8M791 238.8h0.8M780 244.8h1.8M785 252.8h2.8M793 262.8h0.8M789 266.8h0.8M809 266.8h1.8M785 270.8h2.8M796 278.8h0.8M797 280.8h1.8M776 286.8h1.8M785 296.8h2.8M772 300.8h2.8M796 306.8h0.8M780 308.8h2.8M786 310.8h0.8M772 316.8h2.8M791 318.8h1.8M789 320.8h1.8M780 322.8h4.8M772 330.8h2.8M812 334.8h1.8M780 336.8h2.8M799 338.8h1.8M768 346.8h2.8M772 358.8h0.8M777 368.8h2.8M788 380.8h0.8M772 382.8h1.8M791 400.8h2.8M778 406.8h1.8M768 410.8h1.8M756 414.8h1.8M813 422.8h1.8M798 424.8h0.8M815 424.8h1.8M815 426.8h0.8M756 430.8h1.8M812 438.8h0.8M780 442.8h0.8M816 442.8h2.8M777 444.8h1.8M811 444.8h2.8M774 448.8h2.8M777 452.8h1.8M820 456.8h0.8M792 458.8h0.8M770 462.8h0.8M768 464.8h2.8M756 468.8h1.8M810 478.8h0.8M805 480.8h0.8M776 484.8h1.8M752 360.8h6.8"/>
<path stroke="#d4d4d4" stroke-opacity="0.55" stroke-width="1.25" stroke-dasharray="1.1 0.4 0.6 0.7 0.8 0.3 1.3 0.5 0.4 0.4" fill="none" d="M799 60.8h1.8M777 68.8h1.8M790 68.8h1.8M761 76.8h2.8M785 80.8h0.8M775 82.8h1.8M756 88.8h1.8M773 96.8h1.8M804 96.8h1.8M792 106.8h0.8M816 106.8h1.8M819 114.8h1.8M781 116.8h2.8M760 118.8h1.8M781 122.8h1.8M771 130.8h0.8M804 130.8h0.8M780 132.8h0.8M764 142.8h1.8M814 146.8h1.8M780 152.8h0.8M776 158.8h2.8M819 160.8h0.8M772 170.8h5.8M799 180.8h0.8M771 188.8h1.8M775 190.8h2.8M796 194.8h1.8M822 194.8h0.8M788 196.8h1.8M802 200.8h2.8M788 210.8h2.8M776 214.8h4.8M786 220.8h1.8M804 224.8h0.8M819 230.8h2.8M786 236.8h1.8M793 238.8h0.8M776 246.8h1.8M793 254.8h1.8M823 264.8h1.8M792 266.8h0.8M827 266.8h0.8M791 272.8h0.8M798 278.8h0.8M806 280.8h2.8M772 288.8h2.8M793 296.8h2.8M787 304.8h0.8M797 306.8h0.8M784 308.8h1.8M794 310.8h1.8M777 318.8h0.8M794 318.8h1.8M801 320.8h2.8M784 324.8h0.8M794 332.8h1.8M815 334.8h0.8M785 338.8h1.8M776 342.8h2.8M773 350.8h0.8M782 358.8h1.8M764 374.8h2.8M800 380.8h0.8M760 384.8h5.8M764 402.8h2.8M768 408.8h1.8M771 410.8h0.8M762 418.8h1.8M815 422.8h2.8M810 424.8h1.8M778 426.8h1.8M826 426.8h0.8M796 436.8h0.8M791 440.8h0.8M793 442.8h1.8M771 444.8h0.8M780 444.8h0.8M814 444.8h1.8M764 450.8h1.8M760 454.8h2.8M823 456.8h1.8M816 458.8h0.8M805 462.8h1.8M802 464.8h1.8M782 478.8h0.8M821 478.8h2.8M807 480.8h1.8M752 348.8h6.8M760 348.8h3.8"/>
<path stroke="#d4d4d4" stroke-opacity="0.55" stroke-width="1.25" stroke-dasharray="0.5 0.4 0.9 0.6 1.4 0.4 0.7 0.5" fill="none" d="M818 60.8h2.8M780 68.8h0.8M816 70.8h1.8M766 76.8h1.8M769 82.8h0.8M760 84.8h1.8M775 94.8h0.8M776 96.8h0.8M756 98.8h1.8M795 106.8h0.8M756 108.8h1.8M822 114.8h1.8M785 116.8h1.8M765 122.8h1.8M776 124.8h2.8M784 130.8h0.8M774 132.8h2.8M783 132.8h1.8M768 144.8h1.8M794 148.8h0.8M796 156.8h1.8M803 160.8h2.8M772 162.8h1.8M768 172.8h1.8M778 184.8h0.8M798 188.8h0.8M817 190.8h2.8M818 194.8h1.8M773 196.8h0.8M780 200.8h2.8M778 204.8h2.8M827 210.8h0.8M821 214.8h1.8M797 220.8h0.8M783 228.8h1.8M781 232.8h0.8M788 238.8h1.8M787 240.8h0.8M772 250.8h3.8M790 256.8h0.8M785 266.8h2.8M807 266.8h0.8M795 268.8h2.8M808 274.8h1.8M824 278.8h0.8M780 284.8h1.8M776 292.8h0.8M776 298.8h1.8M827 304.8h0.8M802 306.8h0.8M794 308.8h0.8M776 314.8h2.8M779 318.8h1.8M826 318.8h1.8M804 320.8h2.8M776 328.8h2.8M817 332.8h0.8M819 334.8h2.8M788 338.8h0.8M772 344.8h2.8M776 354.8h2.8M768 366.8h1.8M756 376.8h1.8M811 380.8h1.8M788 386.8h0.8M779 402.8h1.8M782 408.8h2.8M760 412.8h1.8M800 420.8h1.8M769 424.8h1.8M812 424.8h1.8M780 426.8h0.8M760 428.8h2.8M771 438.8h2.8M778 442.8h1.8M804 442.8h1.8M772 444.8h0.8M782 444.8h2.8M823 444.8h2.8M774 452.8h1.8M776 456.8h2.8M764 458.8h2.8M818 458.8h0.8M816 462.8h1.8M760 466.8h2.8M795 478.8h2.8M763 480.8h0.8M788 482.8h2.8M752 356.8h6.8M760 360.8h3.8"/>
<path stroke="#dcdcaa" stroke-opacity="0.64" stroke-width="1.25" stroke-dasharray="0.7 0.5 1.2 0.4 0.5 0.6 0.9 0.3" fill="none" d="M794 58.8h11.8M822 60.8h5.8M765 66.8h3.8M782 68.8h2.8M811 78.8h2.8M756 92.8h2.8M812 96.8h8.8M770 104.8h9.8M801 104.8h8.8M819 106.8h6.8M777 112.8h2.8M789 130.8h4.8M790 136.8h2.8M771 144.8h8.8M801 160.8h1.8M800 166.8h7.8M773 176.8h4.8M791 180.8h5.8M773 192.8h3.8M789 194.8h3.8M776 196.8h3.8M780 206.8h5.8M809 206.8h3.8M792 214.8h11.8M778 222.8h1.8M796 228.8h11.8M815 230.8h2.8M789 254.8h2.8M815 254.8h9.8M784 260.8h9.8M799 266.8h5.8M804 270.8h2.8M818 278.8h4.8M790 282.8h9.8M820 292.8h4.8M809 296.8h1.8M798 304.8h5.8M791 306.8h3.8M797 318.8h11.8M786 322.8h4.8M803 332.8h8.8M775 350.8h6.8M805 354.8h3.8M795 364.8h3.8M810 370.8h6.8M774 382.8h2.8M774 392.8h6.8M776 398.8h11.8M775 420.8h11.8M826 422.8h1.8M775 436.8h6.8M803 436.8h4.8M801 438.8h9.8M820 442.8h7.8M779 448.8h6.8M803 452.8h7.8M790 456.8h9.8M780 462.8h9.8M819 462.8h1.8M775 476.8h7.8M774 480.8h5.8"/>
<path stroke="#dcdcaa" stroke-opacity="0.64" stroke-width="1.25" stroke-dasharray="1.1 0.4 0.6 0.7 0.8 0.3 1.3 0.5 0.4 0.4" fill="none" d="M783 60.8h4.8M756 66.8h4.8M765 68.8h2.8M780 78.8h2.8M807 80.8h3.8M798 94.8h8.8M822 96.8h3.8M783 104.8h9.8M766 106.8h5.8M756 112.8h3.8M810 112.8h6.8M764 136.8h4.8M769 138.8h2.8M786 148.8h6.8M821 160.8h6.8M778 168.8h7.8M772 178.8h3.8M798 190.8h8.8M795 192.8h2.8M794 194.8h1.8M784 200.8h3.8M788 206.8h11.8M806 210.8h1.8M789 220.8h6.8M781 222.8h11.8M809 228.8h6.8M814 232.8h9.8M795 254.8h5.8M826 254.8h1.8M806 260.8h6.8M812 266.8h1.8M793 272.8h3.8M815 280.8h9.8M815 282.8h5.8M826 292.8h1.8M825 296.8h2.8M822 304.8h1.8M822 306.8h3.8M780 320.8h7.8M786 324.8h6.8M823 334.8h2.8M780 352.8h5.8M810 354.8h4.8M785 368.8h8.8M784 372.8h11.8M778 382.8h9.8M789 392.8h3.8M789 398.8h1.8M807 420.8h2.8M784 424.8h7.8M783 436.8h5.8M765 438.8h4.8M783 440.8h6.8M774 444.8h1.8M793 448.8h6.8M765 456.8h1.8M794 458.8h8.8M801 462.8h1.8M762 472.8h9.8M790 476.8h2.8M796 480.8h8.8"/>
<path stroke="#dcdcaa" stroke-opacity="0.64" stroke-width="1.25" stroke-dasharray="0.5 0.4 0.9 0.6 1.4 0.4 0.7 0.5" fill="none" d="M802 60.8h8.8M762 66.8h2.8M769 68.8h6.8M784 78.8h3.8M773 82.8h1.8M765 96.8h3.8M756 102.8h2.8M794 104.8h5.8M783 106.8h2.8M761 112.8h1.8M769 116.8h8.8M769 136.8h6.8M772 140.8h9.8M820 148.8h3.8M777 166.8h9.8M799 168.8h0.8M777 178.8h1.8M825 190.8h2.8M800 192.8h1.8M813 194.8h4.8M782 204.8h4.8M801 206.8h6.8M786 212.8h5.8M799 220.8h1.8M798 224.8h4.8M794 230.8h4.8M809 242.8h1.8M810 254.8h3.8M781 258.8h7.8M814 260.8h5.8M812 268.8h4.8M799 276.8h2.8M825 280.8h2.8M785 292.8h8.8M804 294.8h0.8M788 304.8h2.8M825 304.8h1.8M815 308.8h8.8M807 320.8h6.8M794 324.8h0.8M784 336.8h3.8M780 354.8h9.8M792 364.8h1.8M776 370.8h3.8M769 380.8h4.8M769 390.8h5.8M778 396.8h5.8M781 406.8h9.8M780 422.8h4.8M766 436.8h7.8M798 436.8h3.8M775 438.8h6.8M795 442.8h7.8M818 444.8h3.8M768 452.8h3.8M767 456.8h8.8M812 458.8h2.8M808 462.8h6.8M765 474.8h11.8M822 476.8h2.8M786 484.8h0.8"/>
<path stroke="#ce9178" stroke-opacity="0.7" stroke-width="1.25" stroke-dasharray="0.7 0.5 1.2 0.4 0.5 0.6 0.9 0.3" fill="none" d="M806 58.8h4.8M812 114.8h5.8M811 148.8h7.8M786 182.8h4.8M778 212.8h3.8M786 256.8h2.8M780 310.8h4.8M813 332.8h2.8M766 382.8h4.8M765 420.8h8.8M798 452.8h3.8M796 464.8h4.8"/>
<path stroke="#ce9178" stroke-opacity="0.7" stroke-width="1.25" stroke-dasharray="1.1 0.4 0.6 0.7 0.8 0.3 1.3 0.5 0.4 0.4" fill="none" d="M764 80.8h9.8M787 146.8h8.8M827 156.8h0.8M794 184.8h11.8M806 220.8h11.8M826 262.8h1.8M788 310.8h3.8M814 336.8h6.8M795 382.8h8.8M790 444.8h7.8M802 460.8h3.8M765 480.8h7.8"/>
<path stroke="#ce9178" stroke-opacity="0.7" stroke-width="1.25" stroke-dasharray="0.5 0.4 0.9 0.6 1.4 0.4 0.7 0.5" fill="none" d="M790 94.8h3.8M780 148.8h4.8M771 180.8h6.8M775 188.8h7.8M790 240.8h2.8M788 308.8h5.8M780 324.8h2.8M780 338.8h4.8M790 386.8h9.8M799 444.8h9.8M772 464.8h6.8M810 480.8h8.8"/>
<path stroke="#4ec9b0" stroke-opacity="0.7" stroke-width="1.25" stroke-dasharray="0.7 0.5 1.2 0.4 0.5 0.6 0.9 0.3" fill="none" d="M765 60.8h1.8M824 114.8h1.8M783 140.8h7.8M783 232.8h5.8M809 270.8h6.8M789 334.8h4.8M802 380.8h1.8M760 458.8h3.8M760 482.8h2.8"/>
<path stroke="#4ec9b0" stroke-opacity="0.7" stroke-width="1.25" stroke-dasharray="1.1 0.4 0.6 0.7 0.8 0.3 1.3 0.5 0.4 0.4" fill="none" d="M795 94.8h1.8M791 116.8h2.8M787 190.8h5.8M786 264.8h5.8M786 274.8h9.8M787 350.8h1.8M811 426.8h2.8M765 476.8h9.8"/>
<path stroke="#4ec9b0" stroke-opacity="0.7" stroke-width="1.25" stroke-dasharray="0.5 0.4 0.9 0.6 1.4 0.4 0.7 0.5" fill="none" d="M780 112.8h4.8M766 130.8h3.8M776 220.8h7.8M799 270.8h3.8M784 326.8h4.8M773 354.8h1.8M760 438.8h3.8M781 480.8h5.8"/>
<path stroke="#c586c0" stroke-opacity="0.8" stroke-width="1.25" stroke-dasharray="0.7 0.5 1.2 0.4 0.5 0.6 0.9 0.3" fill="none" d="M760 78.8h3.8M760 114.8h2.8M760 136.8h3.8M772 158.8h2.8M776 240.8h2.8M780 280.8h2.8M768 362.8h3.8M764 446.8h3.8"/>
<path stroke="#c586c0" stroke-opacity="0.8" stroke-width="1.25" stroke-dasharray="1.1 0.4 0.6 0.7 0.8 0.3 1.3 0.5 0.4 0.4" fill="none" d="M760 80.8h2.8M764 116.8h3.8M768 140.8h2.8M772 184.8h4.8M776 258.8h3.8M776 294.8h2.8M760 420.8h3.8M764 484.8h4.8"/>
<path stroke="#c586c0" stroke-opacity="0.8" stroke-width="1.25" stroke-dasharray="0.5 0.4 0.9 0.6 1.4 0.4 0.7 0.5" fill="none" d="M760 86.8h3.8M760 122.8h2.8M768 148.8h2.8M776 234.8h2.8M780 276.8h3.8M780 296.8h3.8M764 426.8h4.8"/>
</svg></div>
  <div id="ruler"><svg width="14" height="429" viewBox="828 57 14 429" style="position:absolute;left:-1px;top:-1px" shape-rendering="crispEdges">
<rect x="829" y="346" width="13" height="20" fill="#424242"/>
<rect x="838" y="349" width="4" height="2" fill="#b43636"/>
<rect x="829" y="351" width="9" height="2" fill="#44796b"/><rect x="838" y="351" width="4" height="2" fill="#8d7e6e"/>
<rect x="829" y="353" width="9" height="4" fill="#4788a7"/><rect x="838" y="353" width="4" height="4" fill="#6f88ab"/>
<rect x="829" y="357" width="9" height="2" fill="#406593"/><rect x="838" y="357" width="4" height="2" fill="#8d6598"/>
</svg></div>
  <div id="header">
    <span class="ts">TS</span>
    <span class="fn">walkThroughPart.ts</span>
    <span class="path">src/vs/workbench/parts/welcome/walkThrough/electron-browser</span>
<svg width="792" height="35" viewBox="0 0 792 35" fill="none" stroke="#c5c5c5" stroke-width="1.1">
<path d="M708 16v-4.5h6l3.5 3.5v6.5h-3"/><path d="M713.8 11.5v3.7h3.7"/>
<path d="M708.5 17H704.500v7.5h8v-2.500"/>
<circle cx="711.200" cy="18.400" r="2.900" stroke="#6cb6f5" stroke-width="1.500"/><path d="M713.300 20.600L717.500 24.300" stroke="#6cb6f5" stroke-width="1.800"/>
<rect x="737" y="12.500" width="13" height="11"/><path d="M736.500 13.300h14" stroke-width="2.600"/><path d="M743.500 14v9.500" stroke-width="1.200"/>
<path d="M770.600 14.600l6.800 6.800M777.400 14.600l-6.800 6.800" stroke="#ececec" stroke-width="2.300"/>
</svg>
  </div>
  </div>
  <div id="status">
<svg width="842" height="22" viewBox="0 0 842 22" fill="none" stroke="#ffffff" stroke-width="1.200">
<circle cx="16.800" cy="6.300" r="1.600" stroke-width="1.100"/><circle cx="16.800" cy="15.300" r="1.600" stroke-width="1.100"/><circle cx="22" cy="7.900" r="1.600" stroke-width="1.100"/>
<path d="M16.800 8v5.600M22 9.600c0 3-5.200 1.600-5.200 4" stroke-width="1.500"/>
<path d="M113.800 9.200a4.300 4.300 0 0 0-7.800-0.600M105.800 12a4.300 4.300 0 0 0 7.800 0.600" stroke-width="1.500"/>
<path d="M114.800 6.200v3.600h-3.600zM104.800 15v-3.600h3.600z" fill="#fff" stroke="none"/>
<circle cx="133" cy="11.500" r="5.400" fill="#fff" stroke="none"/>
<path d="M130.900 9.400l4.200 4.200M135.100 9.400l-4.200 4.200" stroke="#007acc" stroke-width="1.700"/>
<path d="M161 5.600l5.600 10.800h-11.200z" fill="#fff" stroke="#fff" stroke-width="1" stroke-linejoin="round"/>
<path d="M161 9v4" stroke="#007acc" stroke-width="1.500"/><circle cx="161" cy="14.800" r="0.850" fill="#007acc" stroke="none"/>
<circle cx="819" cy="10.800" r="6.900" fill="#fff" stroke="none"/>
<g fill="#007acc" stroke="none"><ellipse cx="816.600" cy="8.800" rx="1.100" ry="1.500"/><ellipse cx="821.400" cy="8.800" rx="1.100" ry="1.500"/></g>
<path d="M814.800 12.100a4.400 4.400 0 0 0 8.400 0" stroke="#007acc" stroke-width="1.400"/>
</svg>
    <span style="left:28px;letter-spacing:.75px">d4bbcc63!</span>
    <span style="left:143.5px">4</span>
    <span style="left:171.5px">0</span>
    <span style="left:410px;letter-spacing:.05px">Ln 1, Col 1</span>
    <span style="left:483px;letter-spacing:.2px">Tab Size: 4</span>
    <span style="left:559.5px;letter-spacing:.8px">UTF-8</span>
    <span style="left:611.5px;letter-spacing:.5px">LF</span>
    <span style="left:640.5px;letter-spacing:.44px">TypeScript</span>
    <span style="left:716.5px;letter-spacing:.15px">2.3.3</span>
    <span style="left:760px;letter-spacing:.33px">TSLint</span>
  </div>
</div>
</body>
</html>
